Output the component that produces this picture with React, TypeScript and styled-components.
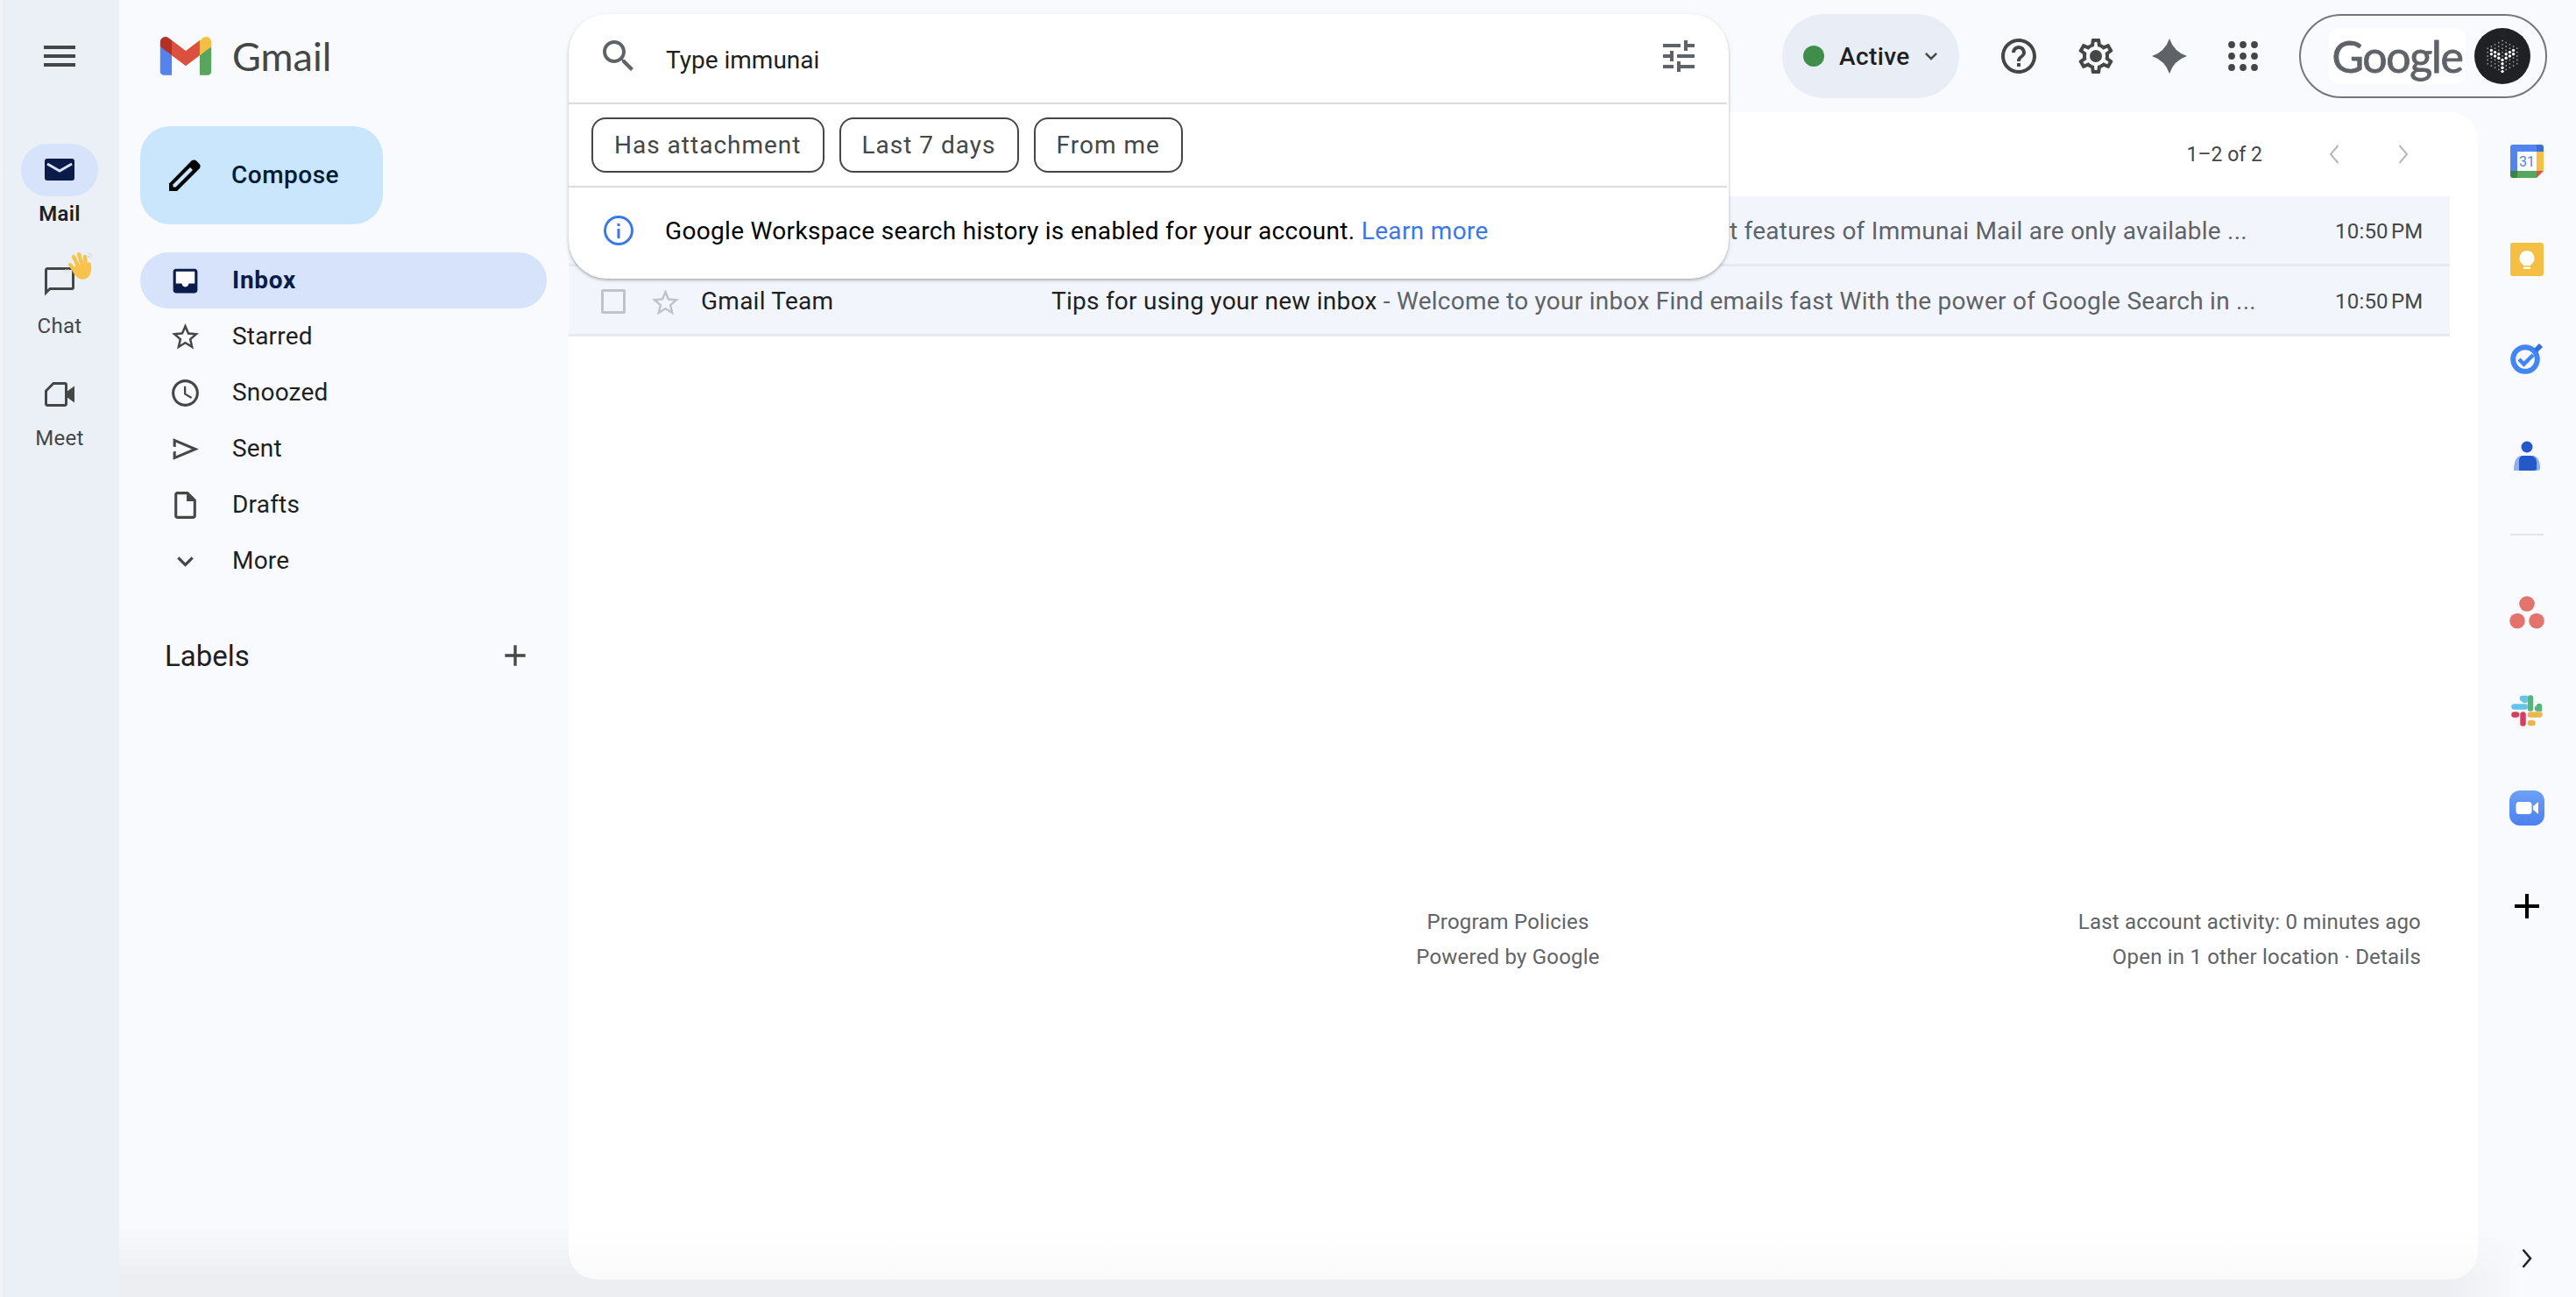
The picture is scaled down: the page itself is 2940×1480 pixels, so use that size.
import styled, { createGlobalStyle } from 'styled-components';

const GlobalStyle = createGlobalStyle`
  html, body {
    margin: 0;
    padding: 0;
    background: #f8fafd;
  }
  body {
    font-family: Roboto, "Liberation Sans", sans-serif;
    color: #1f1f1f;
  }
`;

const Page = styled.div`
  position: relative;
  display: flex;
  width: 2940px;
  height: 1480px;
  overflow: hidden;
  background: #f8fafd;
`;

const BottomShade = styled.div`
  position: absolute;
  left: 136px;
  bottom: 0;
  width: 2740px;
  height: 80px;
  background: linear-gradient(to bottom, rgba(236, 238, 243, 0), #eceef2 72%);
  mask-image: linear-gradient(to right, #000 97%, transparent);
`;

/* left app rail */
const Rail = styled.aside`
  width: 136px;
  flex: none;
  display: flex;
  flex-direction: column;
  align-items: center;
  background: #ebf0f7;
  border-left: 3px solid #f3f5f9;
  box-sizing: border-box;
  padding-right: 3px;
`;

const MenuButton = styled.div`
  height: 128px;
  display: flex;
  align-items: center;
  justify-content: center;
  flex: none;
  margin-bottom: 36px;
`;

const RailItem = styled.div`
  width: 100%;
  height: 128px;
  display: flex;
  flex-direction: column;
  align-items: center;
`;

const RailIcon = styled.div<{ $active?: boolean }>`
  position: relative;
  width: 88px;
  height: 60px;
  border-radius: 30px;
  display: flex;
  align-items: center;
  justify-content: center;
  background: ${p => (p.$active ? '#d6e3fa' : 'transparent')};
`;

const RailLabel = styled.div<{ $active?: boolean }>`
  margin-top: 5px;
  font-size: 24px;
  line-height: 30px;
  letter-spacing: 0.3px;
  font-weight: ${p => (p.$active ? 600 : 400)};
  color: ${p => (p.$active ? '#1f1f1f' : '#444746')};
`;

const WaveBadge = styled.div`
  position: absolute;
  left: 49px;
  top: -5px;
  width: 36px;
  height: 36px;
`;

/* everything between the rails */
const Center = styled.div`
  flex: 1;
  min-width: 0;
  display: flex;
  flex-direction: column;
`;

const TopBar = styled.header`
  height: 128px;
  flex: none;
  display: flex;
  align-items: center;
  padding-left: 46px;
`;

const Logo = styled.div`
  display: flex;
  align-items: center;
  gap: 23px;
`;

const LogoText = styled.span`
  font-family: Lato, Roboto, sans-serif;
  font-size: 45px;
  line-height: 1;
  color: #444746;
`;

const TopActions = styled.div`
  margin-left: auto;
  display: flex;
  align-items: center;
`;

const StatusPill = styled.div`
  width: 202px;
  height: 96px;
  border-radius: 48px;
  background: #e9eef6;
  display: flex;
  align-items: center;
  padding-left: 24px;
  box-sizing: border-box;
`;

const StatusDot = styled.span`
  width: 24px;
  height: 24px;
  border-radius: 50%;
  background: #3f8f4b;
  margin-right: 17px;
`;

const StatusText = styled.span`
  font-size: 28px;
  font-weight: 500;
  letter-spacing: 0.4px;
  color: #1f1f1f;
  margin-right: 10px;
`;

const IconRow = styled.div`
  display: flex;
  align-items: center;
  margin-left: 44px;
  gap: 40px;
`;

const AppsSlot = styled.span`
  display: flex;
  margin-left: 7px;
`;

const AccountPill = styled.div`
  width: 283px;
  height: 96px;
  margin-left: 47px;
  margin-right: -79px;
  border: 2px solid #747775;
  border-radius: 48px;
  box-sizing: border-box;
  display: flex;
  align-items: center;
  padding-left: 32px;
  gap: 10px;
`;

const GoogleBox = styled.div`
  width: 156px;
  height: 64px;
  border-radius: 12px;
  background: #fff;
  display: flex;
  align-items: center;
  justify-content: center;
`;

const GoogleWord = styled.span`
  font-family: Lato, Roboto, sans-serif;
  font-size: 50px;
  line-height: 64px;
  color: #5f6368;
  letter-spacing: -1.3px;
  -webkit-text-stroke: 0.8px #5f6368;
`;

const Body = styled.div`
  flex: 1;
  min-height: 0;
  display: flex;
`;

/* sidebar */
const Nav = styled.nav`
  width: 513px;
  flex: none;
  box-sizing: border-box;
  padding: 16px 25px 0 24px;
`;

const ComposeButton = styled.div`
  width: 277px;
  height: 112px;
  border-radius: 34px;
  background: #c9e6fc;
  display: flex;
  align-items: center;
  padding-left: 32px;
  box-sizing: border-box;
  gap: 35px;
  margin-bottom: 32px;
`;

const ComposeLabel = styled.span`
  font-size: 28px;
  font-weight: 500;
  letter-spacing: 0.5px;
  color: #001d35;
  margin-bottom: 2px;
`;

const NavRow = styled.div<{ $active?: boolean }>`
  height: 64px;
  border-radius: 32px;
  display: flex;
  align-items: center;
  padding-left: 33px;
  gap: 35px;
  font-size: 28px;
  letter-spacing: ${p => (p.$active ? '0.7px' : '0.2px')};
  font-weight: ${p => (p.$active ? 700 : 400)};
  color: ${p => (p.$active ? '#0b1c4a' : '#1f1f1f')};
  background: ${p => (p.$active ? '#d6e3fa' : 'transparent')};
`;

const NavLabel = styled.span`
  margin-bottom: 2px;
`;

const LabelsHeader = styled.div`
  margin-top: 48px;
  height: 56px;
  display: flex;
  align-items: center;
  justify-content: space-between;
  padding: 0 16px 0 28px;
  font-size: 33px;
  color: #1f1f1f;
`;

/* mail card */
const Card = styled.main`
  position: relative;
  z-index: 1;
  flex: 1;
  min-width: 0;
  margin-bottom: 20px;
  background: linear-gradient(to bottom, #fff 96%, #fafafb 100%);
  border-radius: 32px;
  padding-right: 32px;
  display: flex;
  flex-direction: column;
`;

const Toolbar = styled.div`
  height: 96px;
  flex: none;
  display: flex;
  align-items: center;
  justify-content: flex-end;
  padding-right: 46px;
`;

const PageCount = styled.span`
  font-size: 23px;
  color: #444746;
  margin-right: 75px;
`;

const Pager = styled.div`
  display: flex;
  gap: 65px;
`;

const MailRow = styled.div`
  height: 80px;
  flex: none;
  box-sizing: border-box;
  display: flex;
  align-items: center;
  background: #f2f6fc;
  border-bottom: 3px solid #e6e9f2;
  padding: 2px 33px 0 37px;
  font-size: 28px;
  letter-spacing: 0.25px;
`;

const Checkbox = styled.span`
  width: 28px;
  height: 28px;
  flex: none;
  box-sizing: border-box;
  border: 3px solid #c0c3c9;
  border-radius: 2px;
`;

const StarCell = styled.span`
  margin: 4px 0 0 27px;
  flex: none;
  display: flex;
`;

const Sender = styled.span`
  margin-left: 22px;
  width: 400px;
  flex: none;
  color: #1f1f1f;
  white-space: nowrap;
`;

const Preview = styled.span<{ $end?: boolean }>`
  flex: 1;
  min-width: 0;
  white-space: nowrap;
  overflow: hidden;
  color: #5f6368;
  text-align: ${p => (p.$end ? 'right' : 'left')};
  padding-right: ${p => (p.$end ? '100px' : '0')};
`;

const Subject = styled.span`
  color: #1f1f1f;
`;

const Time = styled.span`
  width: 98px;
  flex: none;
  text-align: right;
  font-size: 24px;
  letter-spacing: 0.2px;
  word-spacing: -3px;
  color: #444746;
  white-space: nowrap;
`;

const Footer = styled.footer`
  margin-top: auto;
  display: flex;
  justify-content: space-between;
  height: 428px;
  padding: 0 33px 0 959px;
  font-size: 24px;
  line-height: 40px;
  letter-spacing: 0.2px;
  color: #5f6368;
`;

const FooterCenter = styled.div`
  width: 226px;
  text-align: center;
  white-space: nowrap;
`;

const FooterRight = styled.div`
  text-align: right;
`;

/* right rail */
const SideRail = styled.aside`
  width: 112px;
  flex: none;
  display: flex;
  flex-direction: column;
  align-items: center;
  padding-top: 165px;
  box-sizing: border-box;
`;

const SideIcon = styled.div<{ $gap: number }>`
  display: flex;
  justify-content: center;
  width: 48px;
  margin-bottom: ${p => p.$gap}px;
`;

const SideDivider = styled.div`
  width: 38px;
  height: 2px;
  background: #e3e5ea;
  margin-bottom: 69px;
`;

const SideBottom = styled.div`
  margin-top: auto;
  margin-bottom: 33px;
  display: flex;
`;

/* search dropdown over the page */
const SearchPanel = styled.section`
  position: absolute;
  left: 649px;
  top: 16px;
  width: 1324px;
  height: 302px;
  background: #fff;
  border-radius: 44px;
  box-shadow: 0 2px 3px rgba(60, 64, 67, 0.32), 0 1px 6px rgba(60, 64, 67, 0.08);
  z-index: 5;
  display: flex;
  flex-direction: column;
`;

const SearchRow = styled.div`
  height: 103px;
  flex: none;
  display: flex;
  align-items: center;
  padding: 0 31px 0 33px;
  box-sizing: border-box;
  border-bottom: 2px solid #dadce0;
  margin-right: 2px;
`;

const SearchGlyph = styled.span`
  display: flex;
  margin-bottom: 5px;
`;

const SearchText = styled.span`
  margin: 3px 0 0 30px;
  font-size: 28px;
  color: #1f1f1f;
`;

const TuneButton = styled(SearchGlyph)`
  margin-left: auto;
`;

const ChipRow = styled.div`
  height: 95px;
  flex: none;
  display: flex;
  align-items: center;
  gap: 17px;
  padding-left: 26px;
  box-sizing: border-box;
  border-bottom: 2px solid #dadce0;
  margin-right: 2px;
`;

const Chip = styled.span`
  height: 63px;
  box-sizing: border-box;
  border: 2px solid #444746;
  border-radius: 16px;
  padding: 0 24px;
  display: flex;
  align-items: center;
  font-size: 28px;
  letter-spacing: 1px;
  color: #444746;
`;

const InfoRow = styled.div`
  flex: 1;
  display: flex;
  align-items: center;
  padding: 0 0 6px 39px;
  gap: 35px;
  font-size: 28px;
  letter-spacing: 0.32px;
  color: #000;
`;

const LearnMore = styled.a`
  color: #3b78e7;
`;

const Icon = ({ d, size = 37, color = '#444746' }: { d: string; size?: number; color?: string }) => (
  <svg width={size} height={size} viewBox="0 0 24 24" fill={color}>
    <path d={d} />
  </svg>
);

const paths = {
  menu: 'M3 18h18v-2H3v2zm0-5h18v-2H3v2zm0-7v2h18V6H3z',
  search:
    'M15.5 14h-.79l-.28-.27C15.41 12.59 16 11.11 16 9.5 16 5.91 13.09 3 9.5 3S3 5.91 3 9.5 5.91 16 9.5 16c1.61 0 3.09-.59 4.23-1.57l.27.28v.79l5 4.99L20.49 19l-4.99-5zm-6 0C7.01 14 5 11.99 5 9.5S7.01 5 9.5 5 14 7.01 14 9.5 11.99 14 9.5 14z',
  tune: 'M3 17v2h6v-2H3zM3 5v2h10V5H3zm10 16v-2h8v-2h-8v-2h-2v6h2zM7 9v2H3v2h4v2h2V9H7zm14 4v-2H11v2h10zm-6-4h2V7h4V5h-4V3h-2v6z',
  star: 'M22 9.24l-7.19-.62L12 2 9.19 8.63 2 9.24l5.46 4.73L5.82 21 12 17.27 18.18 21l-1.63-7.03L22 9.24zM12 15.4l-3.76 2.27 1-4.28-3.32-2.88 4.38-.38L12 6.1l1.71 4.04 4.38.38-3.32 2.88 1 4.28L12 15.4z',
  clock:
    'M11.99 2C6.47 2 2 6.48 2 12s4.47 10 9.99 10C17.52 22 22 17.52 22 12S17.52 2 11.99 2zM12 20c-4.42 0-8-3.58-8-8s3.58-8 8-8 8 3.58 8 8-3.58 8-8 8zm.5-13H11v6l5.25 3.15.75-1.23-4.5-2.67z',
  send: 'M3 20v-6l8-2-8-2V4l19 8-19 8zm2-3 11.85-5L5 7v3.5l6 1.5-6 1.5V17z',
  draft: 'M14 2H6c-1.1 0-1.99.9-1.99 2L4 20c0 1.1.89 2 1.99 2H18c1.1 0 2-.9 2-2V8l-6-6zm4 18H6V4h7v5h5v11z',
  down: 'M7.41 8.59L12 13.17l4.59-4.58L18 10l-6 6-6-6z',
  plus: 'M19 13h-6v6h-2v-6H5v-2h6V5h2v6h6v2z',
  help: 'M11 18h2v-2h-2v2zm1-16C6.48 2 2 6.48 2 12s4.48 10 10 10 10-4.48 10-10S17.52 2 12 2zm0 18c-4.41 0-8-3.59-8-8s3.59-8 8-8 8 3.59 8 8-3.59 8-8 8zm0-14c-2.21 0-4 1.79-4 4h2c0-1.1.9-2 2-2s2 .9 2 2c0 2-3 1.75-3 5h2c0-2.25 3-2.5 3-5 0-2.21-1.79-4-4-4z',
  gear: 'M19.43 12.98c.04-.32.07-.64.07-.98 0-.34-.03-.66-.07-.98l2.11-1.65c.19-.15.24-.42.12-.64l-2-3.46c-.09-.16-.26-.25-.44-.25-.06 0-.12.01-.17.03l-2.49 1c-.52-.4-1.08-.73-1.69-.98l-.38-2.65C14.46 2.18 14.25 2 14 2h-4c-.25 0-.46.18-.49.42l-.38 2.65c-.61.25-1.17.59-1.69.98l-2.49-1c-.06-.02-.12-.03-.18-.03-.17 0-.34.09-.43.25l-2 3.46c-.13.22-.07.49.12.64l2.11 1.65c-.04.32-.07.65-.07.98 0 .33.03.66.07.98l-2.11 1.65c-.19.15-.24.42-.12.64l2 3.46c.09.16.26.25.44.25.06 0 .12-.01.17-.03l2.49-1c.52.4 1.08.73 1.69.98l.38 2.65c.03.24.24.42.49.42h4c.25 0 .46-.18.49-.42l.38-2.65c.61-.25 1.17-.59 1.69-.98l2.49 1c.06.02.12.03.18.03.17 0 .34-.09.43-.25l2-3.46c.12-.22.07-.49-.12-.64l-2.11-1.65zm-1.98-1.71c.04.31.05.52.05.73 0 .21-.02.43-.05.73l-.14 1.13.89.7 1.08.84-.7 1.21-1.27-.51-1.04-.42-.9.68c-.43.32-.84.56-1.25.73l-1.06.43-.16 1.13-.2 1.35h-1.4l-.19-1.35-.16-1.13-1.06-.43c-.43-.18-.83-.41-1.23-.71l-.91-.7-1.06.43-1.27.51-.7-1.21 1.08-.84.89-.7-.14-1.13c-.03-.31-.05-.54-.05-.74s.02-.43.05-.73l.14-1.13-.89-.7-1.08-.84.7-1.21 1.27.51 1.04.42.9-.68c.43-.32.84-.56 1.25-.73l1.06-.43.16-1.13.2-1.35h1.39l.19 1.35.16 1.13 1.06.43c.43.18.83.41 1.23.71l.91.7 1.06-.43 1.27-.51.7 1.21-1.07.85-.89.7.14 1.13zM12 8.5a3.500 3.500 0 1 0 0 7 3.500 3.500 0 0 0 0-7z',
};

const ThinChevron = ({ dir, color, weight = 2 }: { dir: 'left' | 'right'; color: string; weight?: number }) => (
  <svg width="14" height="22" viewBox="0 0 14 22" fill="none" stroke={color} strokeWidth={weight}>
    <path d={dir === 'left' ? 'M11.5 1 3 11l8.500 10' : 'M2.500 1 11 11 2.500 21'} />
  </svg>
);

const GmailMark = () => (
  <svg width="60" height="44" viewBox="0 0 256 193">
    <path fill="#5383ec" d="M58.182 192.05V93.14L27.507 65.077 0 49.504v125.091c0 9.658 7.825 17.455 17.455 17.455h40.727Z" />
    <path fill="#58a55d" d="M197.818 192.05h40.727c9.659 0 17.455-7.826 17.455-17.455V49.505l-31.156 17.837-27.026 25.798v98.91Z" />
    <path fill="#dc5040" d="m58.182 93.14-4.174-38.647 4.174-36.989L128 69.868l69.818-52.364 4.669 34.992-4.669 40.644L128 145.504z" />
    <path fill="#f4bf42" d="M197.818 17.504V93.14L256 49.504V26.231c0-21.585-24.64-33.89-41.89-20.945l-16.292 13.218Z" />
    <path fill="#b23125" d="m0 49.504 26.759 20.07L58.182 93.14V17.504L41.89 5.286C24.61-7.66 0 4.646 0 26.23v23.273Z" />
  </svg>
);

const MailFilled = () => (
  <svg width="34" height="26" viewBox="0 0 34 26">
    <rect width="34" height="25" rx="3" fill="#0b1c4a" />
    <path d="M3 6l14 8 14-8" fill="none" stroke="#d6e3fa" strokeWidth="3" />
  </svg>
);

const ChatOutline = () => (
  <svg width="34" height="34" viewBox="0 0 34 34" fill="none" stroke="#444746" strokeWidth="3">
    <path d="M1.5 29V3a1.5 1.5 0 0 1 1.5-1.5h28a1.5 1.5 0 0 1 1.5 1.5v20a1.5 1.5 0 0 1-1.5 1.5H6z" />
  </svg>
);

const MeetOutline = () => (
  <svg width="34" height="28" viewBox="0 0 34 28">
    <path d="M10 1.5h13a1.5 1.5 0 0 1 1.5 1.5v22a1.5 1.5 0 0 1-1.5 1.5H3A1.5 1.5 0 0 1 1.5 25V10z" fill="none" stroke="#444746" strokeWidth="3" />
    <path d="M25 11l9-6.5v19L25 17z" fill="#444746" />
  </svg>
);

const WaveHand = () => (
  <svg width="36" height="36" viewBox="0 0 36 36">
    <g stroke="#cfd3d8" strokeWidth="1" fill="none">
      <path d="M2 20c-.5 2 0 4 1 5M5 20c-.5 1.500 0 3 .8 4" />
      <path d="M28 2c2 .5 3.500 2 4 4M27 5c1.500.4 2.500 1.300 3 2.800" />
    </g>
    <g stroke="#f8c24c" strokeWidth="4.4" strokeLinecap="round">
      <path d="M7 15l7 9" />
      <path d="M11 6l6 12" />
      <path d="M17 3l4 13" />
      <path d="M24 6l1 11" />
    </g>
    <path d="M9 20c2 8 9 14 16 11 5-2 7-9 6-16l-1-3-3 1-2 5-9-4z" fill="#f8c24c" />
  </svg>
);

const ComposePencil = () => (
  <svg width="37" height="37" viewBox="0 0 37 37">
    <path d="M32 1.500 35.500 5c1.500 1.500 1.500 4 0 5.500L10 36H1v-8.500L26.500 1.500c1.500-1.500 4-1.500 5.500 0z" fill="#000" />
    <path d="M5.500 28.500v3h3L28 12l-3-3z" fill="#c9e6fc" />
  </svg>
);

const InboxFilled = () => (
  <svg width="37" height="37" viewBox="0 0 24 24">
    <path d="M5 5h14v10h-4c0 1.660-1.350 3-3 3s-3-1.340-3-3H5z" fill="#fff" />
    <path fill="#0b1c4a" d="M19 3H5c-1.100 0-2 .9-2 2v14c0 1.100.9 2 2 2h14c1.100 0 2-.9 2-2V5c0-1.100-.9-2-2-2zm0 11h-4.500c0 1.400-1.100 2.500-2.500 2.500S9.500 15.400 9.500 14H5V5h14v9z" />
  </svg>
);

const InfoIcon = () => (
  <svg width="36" height="36" viewBox="0 0 36 36" fill="none">
    <circle cx="18" cy="18" r="15.500" stroke="#3b78e7" strokeWidth="3" />
    <rect x="16.500" y="16" width="3" height="11" fill="#3b78e7" />
    <rect x="16.500" y="10" width="3" height="3" fill="#3b78e7" />
  </svg>
);

const Spark = () => (
  <svg width="40" height="40" viewBox="0 0 40 40">
    <path d="M20 0Q25 15 40 20 25 25 20 40 15 25 0 20 15 15 20 0z" fill="#5f6368" />
  </svg>
);

const AppsGrid = () => (
  <svg width="34" height="34" viewBox="0 0 34 34" fill="#444746">
    {[4, 17, 30].flatMap(y => [4, 17, 30].map(x => <circle key={`${x}-${y}`} cx={x} cy={y} r="3.900" />))}
  </svg>
);

const distToSegment = (px: number, py: number, ax: number, ay: number, bx: number, by: number) => {
  const dx = bx - ax;
  const dy = by - ay;
  const t = Math.max(0, Math.min(1, ((px - ax) * dx + (py - ay) * dy) / (dx * dx + dy * dy)));
  return Math.hypot(px - ax - t * dx, py - ay - t * dy);
};

// dotted cube of the account avatar
const Avatar = () => {
  const dots: { x: number; y: number; bright: boolean }[] = [];
  for (let col = -4; col <= 4; col++) {
    for (let row = -5; row <= 5; row++) {
      const x = col * 4.2;
      const y = row * 4.4 + (col % 2 ? 2.2 : 0);
      if (Math.abs(y) > 21 - Math.abs(x) * 0.58) continue;
      const bright =
        distToSegment(x, y, 0, 4, -14, -7) < 3 ||
        distToSegment(x, y, 0, 4, 14, -7) < 3 ||
        distToSegment(x, y, 0, 4, 0, 20) < 3;
      dots.push({ x: 32 + x, y: 32 + y, bright });
    }
  }
  return (
    <svg width="64" height="64" viewBox="0 0 64 64">
      <circle cx="32" cy="32" r="32" fill="#202124" />
      {dots.map(d => (
        <circle key={`${d.x}-${d.y}`} cx={d.x} cy={d.y} r={d.bright ? 1.7 : 0.9} fill={d.bright ? '#fff' : '#9d9da2'} />
      ))}
    </svg>
  );
};

const CalendarIcon = () => (
  <svg width="38" height="38" viewBox="0 0 38 38">
    <path d="M3 0h28v8H8v23H0V3a3 3 0 0 1 3-3z" fill="#5383ec" />
    <path d="M30 0h5a3 3 0 0 1 3 3v5h-8z" fill="#3d6fd0" />
    <rect x="30" y="8" width="8" height="22" fill="#f4bf42" />
    <rect x="8" y="30" width="22" height="8" fill="#58a55d" />
    <path d="M0 30h8v8H3a3 3 0 0 1-3-3z" fill="#3b8246" />
    <path d="M30 30h8l-8 8z" fill="#dc5040" />
    <rect x="8" y="8" width="22" height="22" fill="#fff" />
    <text x="19" y="25" textAnchor="middle" fontSize="16" fontFamily="Roboto, sans-serif" fill="#5383ec">31</text>
  </svg>
);

const KeepIcon = () => (
  <svg width="38" height="38" viewBox="0 0 38 38">
    <rect width="38" height="38" rx="3" fill="#f4bf42" />
    <path d="M19 9a8.500 8.500 0 0 1 4.500 15.700V26h-9v-1.300A8.500 8.500 0 0 1 19 9z" fill="#fff" />
    <rect x="15" y="27.500" width="8" height="2.500" fill="#fff" />
  </svg>
);

const TasksIcon = () => (
  <svg width="38" height="36" viewBox="0 0 38 36">
    <circle cx="17" cy="19" r="13.800" fill="none" stroke="#4285f4" strokeWidth="6" />
    <path d="M10 19l5.500 5.500L26 14" fill="none" stroke="#4285f4" strokeWidth="4.500" />
    <path d="M27 7l6-6 4 4-6 6z" fill="#2f6fdc" />
  </svg>
);

const ContactsIcon = () => (
  <svg width="30" height="34" viewBox="0 0 30 34">
    <circle cx="15" cy="7" r="6.500" fill="#2559c9" />
    <path d="M0 34c0-8 2-17 9-17h12c7 0 9 8 9 14a3 3 0 0 1-3 3z" fill="#8faef0" />
    <path d="M6 34V22a5 5 0 0 1 5-5h8a7 7 0 0 1 7 7v7a3 3 0 0 1-3 3z" fill="#2559c9" />
  </svg>
);

const AsanaIcon = () => (
  <svg width="40" height="38" viewBox="0 0 40 38" fill="#e3736d">
    <circle cx="20" cy="9" r="8.800" />
    <circle cx="9" cy="28.500" r="8.800" />
    <circle cx="31" cy="28.500" r="8.800" />
  </svg>
);

const SlackIcon = () => (
  <svg width="36" height="36" viewBox="0 0 36 36" strokeLinecap="round" fill="none" strokeWidth="6.500">
    <path d="M3.500 13.500h12" stroke="#63c3ea" />
    <path d="M13 4h2.500v2" stroke="#63c3ea" />
    <path d="M22 3.500v12" stroke="#58b37f" />
    <path d="M32 13v2.500h-2" stroke="#58b37f" />
    <path d="M22 22.500h10.500" stroke="#e8b84f" />
    <path d="M22 32h2.500" stroke="#e8b84f" />
    <path d="M13.500 22.500v10" stroke="#d43e62" />
    <path d="M3.500 22.500H6" stroke="#d43e62" />
  </svg>
);

const ZoomIcon = () => (
  <svg width="40" height="40" viewBox="0 0 40 40">
    <defs>
      <linearGradient id="zoomFill" x1="0" y1="0" x2="0" y2="1">
        <stop offset="0" stopColor="#6ba1f7" />
        <stop offset="1" stopColor="#4d80f0" />
      </linearGradient>
    </defs>
    <rect width="40" height="40" rx="12" fill="url(#zoomFill)" />
    <rect x="7.500" y="13" width="18" height="14" rx="3.500" fill="#fff" />
    <path d="M27 18l6-5v14l-6-5z" fill="#fff" />
  </svg>
);

const navItems = [
  { label: 'Starred', icon: paths.star },
  { label: 'Snoozed', icon: paths.clock },
  { label: 'Sent', icon: paths.send },
  { label: 'Drafts', icon: paths.draft },
  { label: 'More', icon: paths.down },
];

const App = () => (
  <Page>
    <GlobalStyle />
    <BottomShade />
    <Rail>
      <MenuButton>
        <Icon d={paths.menu} size={48} color="#444746" />
      </MenuButton>
      <RailItem>
        <RailIcon $active>
          <MailFilled />
        </RailIcon>
        <RailLabel $active>Mail</RailLabel>
      </RailItem>
      <RailItem>
        <RailIcon>
          <ChatOutline />
          <WaveBadge>
            <WaveHand />
          </WaveBadge>
        </RailIcon>
        <RailLabel>Chat</RailLabel>
      </RailItem>
      <RailItem>
        <RailIcon>
          <MeetOutline />
        </RailIcon>
        <RailLabel>Meet</RailLabel>
      </RailItem>
    </Rail>

    <Center>
      <TopBar>
        <Logo>
          <GmailMark />
          <LogoText>Gmail</LogoText>
        </Logo>
        <TopActions>
          <StatusPill>
            <StatusDot />
            <StatusText>Active</StatusText>
            <Icon d={paths.down} size={28} />
          </StatusPill>
          <IconRow>
            <Icon d={paths.help} size={48} />
            <Icon d={paths.gear} size={48} />
            <Spark />
            <AppsSlot>
              <AppsGrid />
            </AppsSlot>
          </IconRow>
          <AccountPill>
            <GoogleBox>
              <GoogleWord>Google</GoogleWord>
            </GoogleBox>
            <Avatar />
          </AccountPill>
        </TopActions>
      </TopBar>

      <Body>
        <Nav>
          <ComposeButton>
            <ComposePencil />
            <ComposeLabel>Compose</ComposeLabel>
          </ComposeButton>
          <NavRow $active>
            <InboxFilled />
            <NavLabel>Inbox</NavLabel>
          </NavRow>
          {navItems.map(item => (
            <NavRow key={item.label}>
              <Icon d={item.icon} />
              <NavLabel>{item.label}</NavLabel>
            </NavRow>
          ))}
          <LabelsHeader>
            Labels
            <Icon d={paths.plus} size={40} />
          </LabelsHeader>
        </Nav>

        <Card>
          <Toolbar>
            <PageCount>1–2 of 2</PageCount>
            <Pager>
              <ThinChevron dir="left" color="#b4b7bc" />
              <ThinChevron dir="right" color="#b4b7bc" />
            </Pager>
          </Toolbar>
          <MailRow>
            <Checkbox />
            <StarCell>
              <Icon d={paths.star} color="#c0c3c9" />
            </StarCell>
            <Sender />
            <Preview $end>Some of the best features of Immunai Mail are only available ...</Preview>
            <Time>10:50 PM</Time>
          </MailRow>
          <MailRow>
            <Checkbox />
            <StarCell>
              <Icon d={paths.star} color="#c0c3c9" />
            </StarCell>
            <Sender>Gmail Team</Sender>
            <Preview>
              <Subject>Tips for using your new inbox</Subject> - Welcome to your inbox Find emails fast With the power of Google Search in ...
            </Preview>
            <Time>10:50 PM</Time>
          </MailRow>
          <Footer>
            <FooterCenter>
              <div>Program Policies</div>
              <div>Powered by Google</div>
            </FooterCenter>
            <FooterRight>
              <div>Last account activity: 0 minutes ago</div>
              <div>Open in 1 other location · Details</div>
            </FooterRight>
          </Footer>
        </Card>
      </Body>
    </Center>

    <SideRail>
      <SideIcon $gap={74}>
        <CalendarIcon />
      </SideIcon>
      <SideIcon $gap={76}>
        <KeepIcon />
      </SideIcon>
      <SideIcon $gap={76}>
        <TasksIcon />
      </SideIcon>
      <SideIcon $gap={72}>
        <ContactsIcon />
      </SideIcon>
      <SideDivider />
      <SideIcon $gap={75}>
        <AsanaIcon />
      </SideIcon>
      <SideIcon $gap={73}>
        <SlackIcon />
      </SideIcon>
      <SideIcon $gap={68}>
        <ZoomIcon />
      </SideIcon>
      <SideIcon $gap={0}>
        <Icon d={paths.plus} size={48} color="#000" />
      </SideIcon>
      <SideBottom>
        <ThinChevron dir="right" color="#1f1f1f" weight={2.5} />
      </SideBottom>
    </SideRail>

    <SearchPanel>
      <SearchRow>
        <SearchGlyph>
          <Icon d={paths.search} size={48} color="#5f6368" />
        </SearchGlyph>
        <SearchText>Type immunai</SearchText>
        <TuneButton>
          <Icon d={paths.tune} size={48} color="#5f6368" />
        </TuneButton>
      </SearchRow>
      <ChipRow>
        <Chip>Has attachment</Chip>
        <Chip>Last 7 days</Chip>
        <Chip>From me</Chip>
      </ChipRow>
      <InfoRow>
        <InfoIcon />
        <span>
          Google Workspace search history is enabled for your account. <LearnMore>Learn more</LearnMore>
        </span>
      </InfoRow>
    </SearchPanel>
  </Page>
);

export default App;
